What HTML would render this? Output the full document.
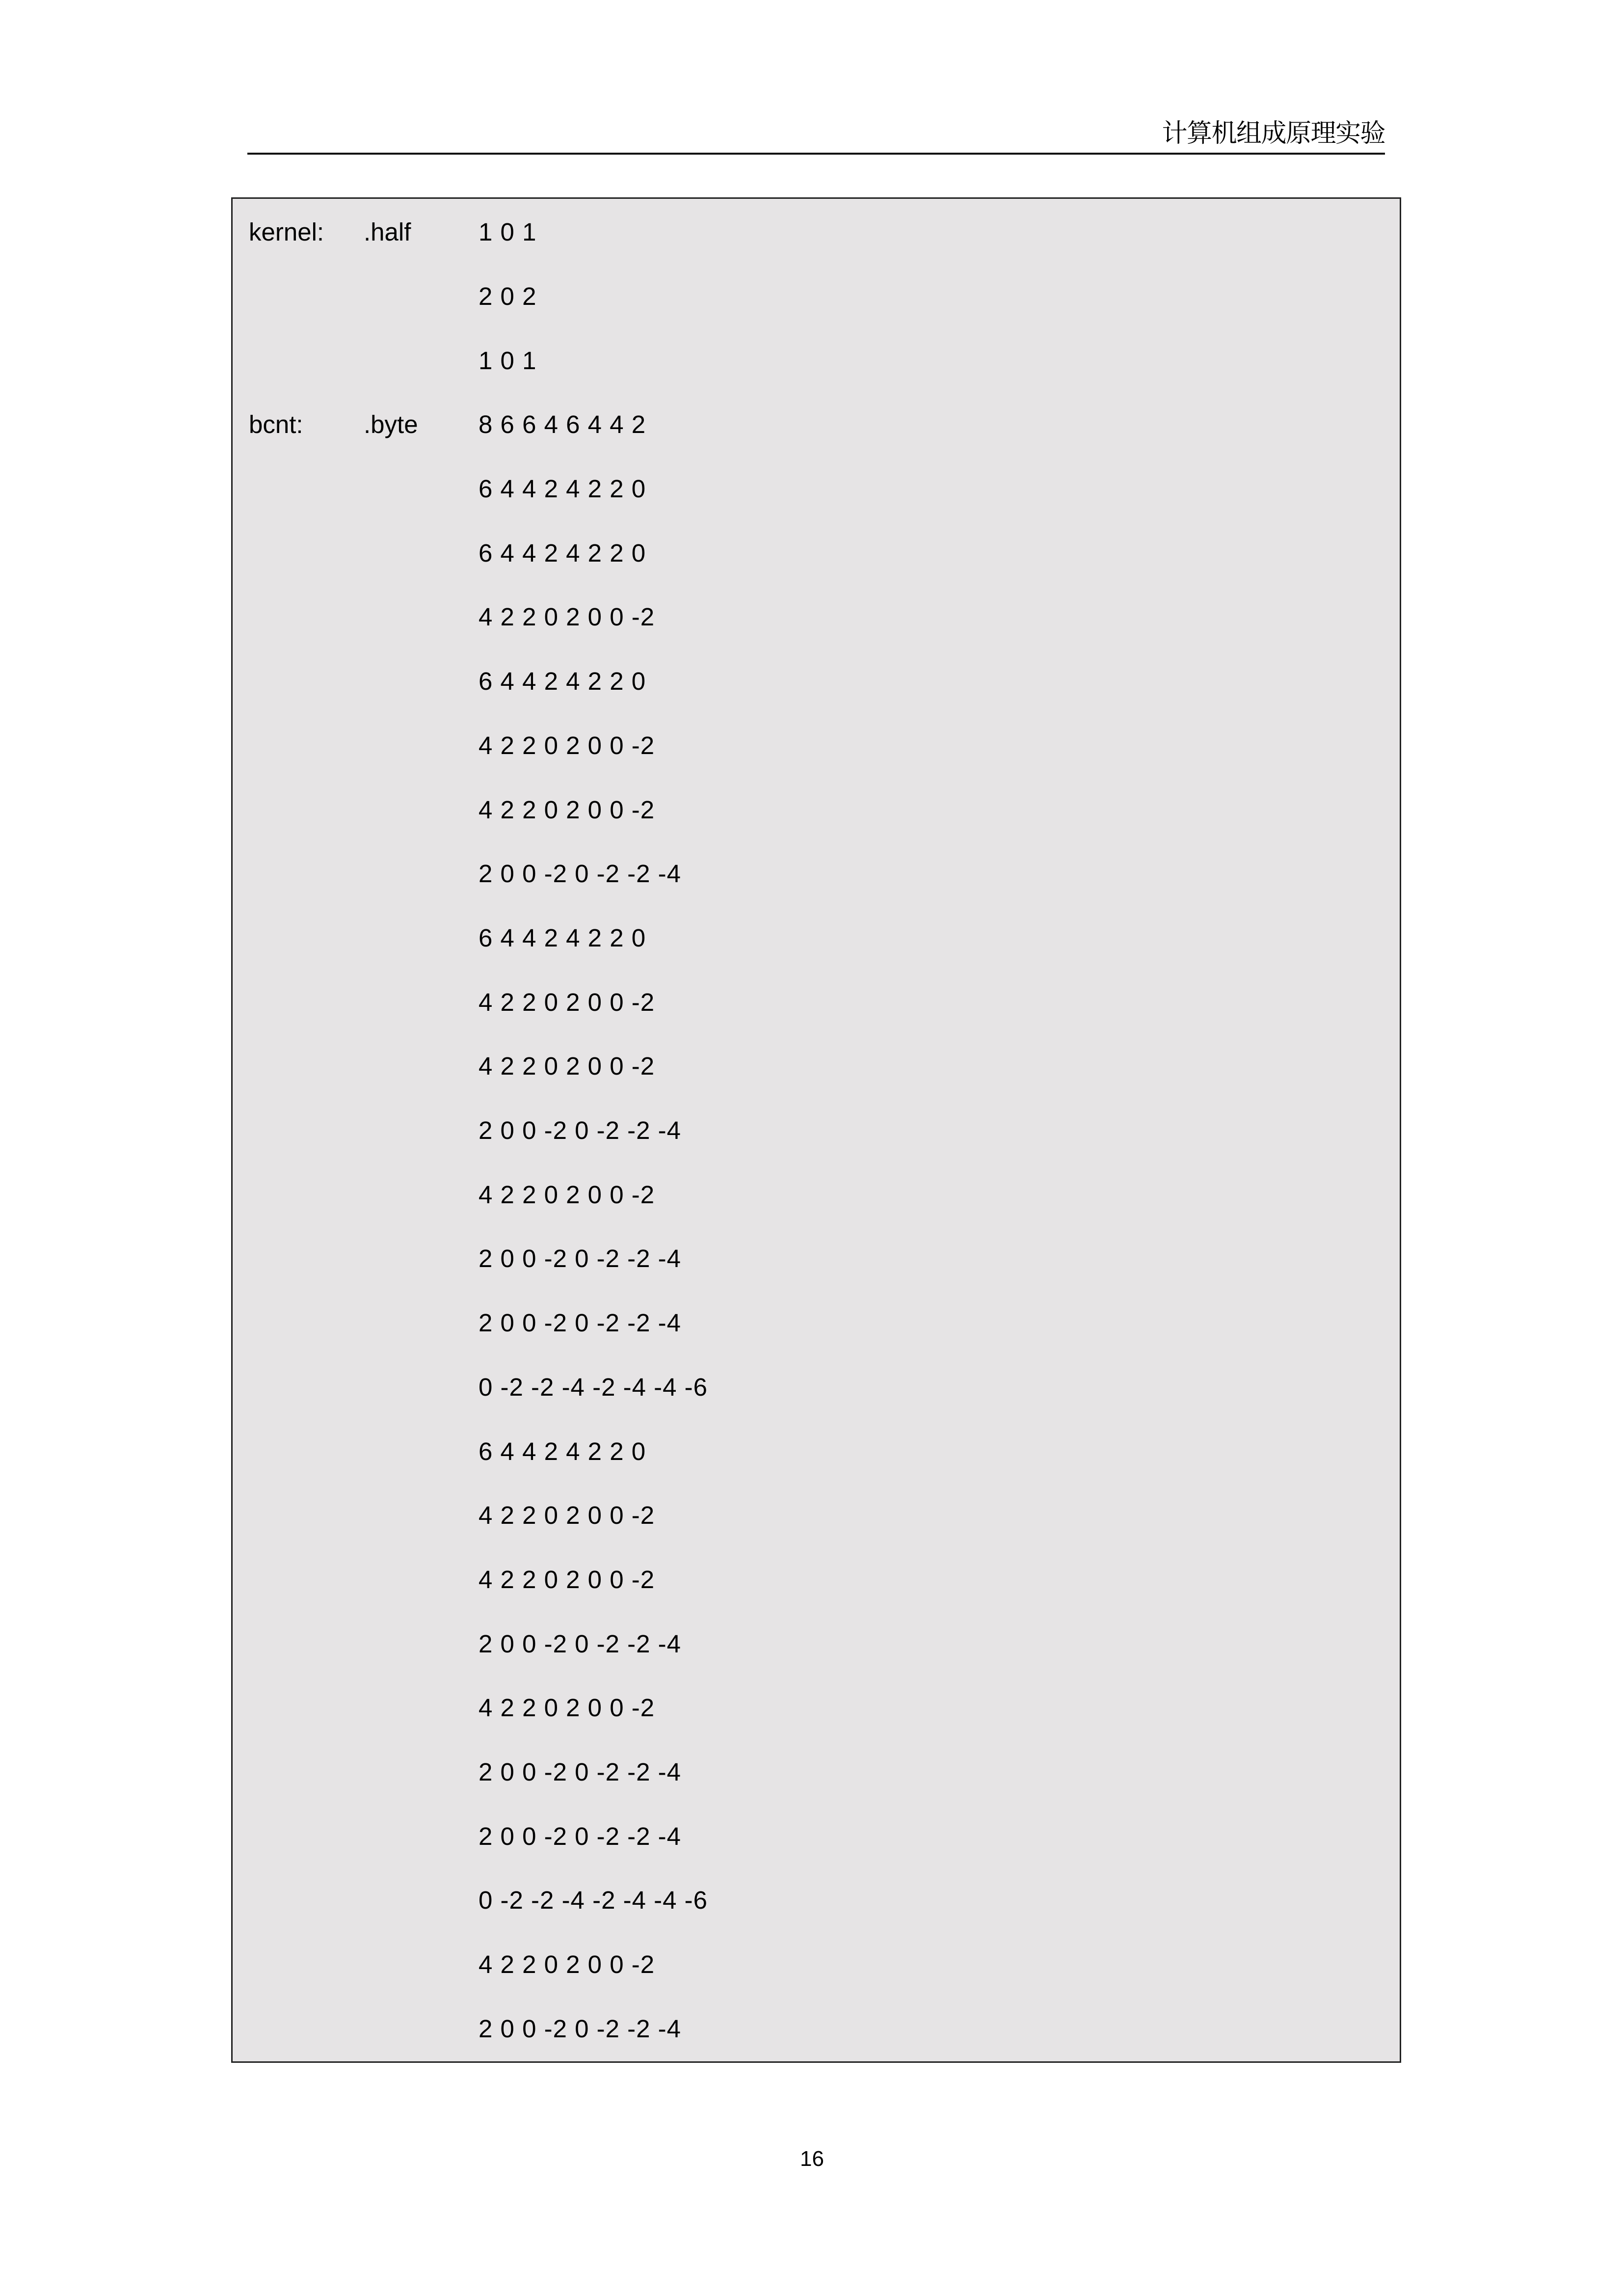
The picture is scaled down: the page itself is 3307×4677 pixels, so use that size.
<!DOCTYPE html>
<html><head><meta charset="utf-8">
<style>
html,body{margin:0;padding:0;background:#fff;}
body{width:3307px;height:4677px;position:relative;overflow:hidden;font-family:"Liberation Sans",sans-serif;color:#000;}
.hdr{position:absolute;right:485px;top:238px;font-family:"Liberation Serif","Noto Serif CJK SC",serif;font-size:52px;line-height:70px;letter-spacing:-1.5px;}
.hline{position:absolute;left:504px;top:311px;width:2318px;height:4px;background:#111;}
.box{position:absolute;left:471px;top:402px;width:2378px;height:3794px;background:#e6e4e5;border:3px solid #222;}
.row{position:absolute;left:0;height:60px;font-size:51px;line-height:60px;white-space:pre;}
.c1{position:absolute;left:33px;}
.c2{position:absolute;left:267px;}
.c3{position:absolute;left:501px;letter-spacing:1px;}
.pn{position:absolute;left:1630px;top:4372px;font-size:44px;line-height:52px;}
</style></head><body>
<div class="hdr">计算机组成原理实验</div>
<div class="hline"></div>
<div class="box">
<div class="row" style="top:38px"><span class="c1">kernel:</span><span class="c2">.half</span><span class="c3">1 0 1</span></div>
<div class="row" style="top:169px"><span class="c3">2 0 2</span></div>
<div class="row" style="top:300px"><span class="c3">1 0 1</span></div>
<div class="row" style="top:430px"><span class="c1">bcnt:</span><span class="c2">.byte</span><span class="c3">8 6 6 4 6 4 4 2</span></div>
<div class="row" style="top:561px"><span class="c3">6 4 4 2 4 2 2 0</span></div>
<div class="row" style="top:692px"><span class="c3">6 4 4 2 4 2 2 0</span></div>
<div class="row" style="top:822px"><span class="c3">4 2 2 0 2 0 0 -2</span></div>
<div class="row" style="top:953px"><span class="c3">6 4 4 2 4 2 2 0</span></div>
<div class="row" style="top:1084px"><span class="c3">4 2 2 0 2 0 0 -2</span></div>
<div class="row" style="top:1215px"><span class="c3">4 2 2 0 2 0 0 -2</span></div>
<div class="row" style="top:1345px"><span class="c3">2 0 0 -2 0 -2 -2 -4</span></div>
<div class="row" style="top:1476px"><span class="c3">6 4 4 2 4 2 2 0</span></div>
<div class="row" style="top:1607px"><span class="c3">4 2 2 0 2 0 0 -2</span></div>
<div class="row" style="top:1737px"><span class="c3">4 2 2 0 2 0 0 -2</span></div>
<div class="row" style="top:1868px"><span class="c3">2 0 0 -2 0 -2 -2 -4</span></div>
<div class="row" style="top:1999px"><span class="c3">4 2 2 0 2 0 0 -2</span></div>
<div class="row" style="top:2129px"><span class="c3">2 0 0 -2 0 -2 -2 -4</span></div>
<div class="row" style="top:2260px"><span class="c3">2 0 0 -2 0 -2 -2 -4</span></div>
<div class="row" style="top:2391px"><span class="c3">0 -2 -2 -4 -2 -4 -4 -6</span></div>
<div class="row" style="top:2522px"><span class="c3">6 4 4 2 4 2 2 0</span></div>
<div class="row" style="top:2652px"><span class="c3">4 2 2 0 2 0 0 -2</span></div>
<div class="row" style="top:2783px"><span class="c3">4 2 2 0 2 0 0 -2</span></div>
<div class="row" style="top:2914px"><span class="c3">2 0 0 -2 0 -2 -2 -4</span></div>
<div class="row" style="top:3044px"><span class="c3">4 2 2 0 2 0 0 -2</span></div>
<div class="row" style="top:3175px"><span class="c3">2 0 0 -2 0 -2 -2 -4</span></div>
<div class="row" style="top:3306px"><span class="c3">2 0 0 -2 0 -2 -2 -4</span></div>
<div class="row" style="top:3436px"><span class="c3">0 -2 -2 -4 -2 -4 -4 -6</span></div>
<div class="row" style="top:3567px"><span class="c3">4 2 2 0 2 0 0 -2</span></div>
<div class="row" style="top:3698px"><span class="c3">2 0 0 -2 0 -2 -2 -4</span></div>
</div>
<div class="pn">16</div>
</body></html>
